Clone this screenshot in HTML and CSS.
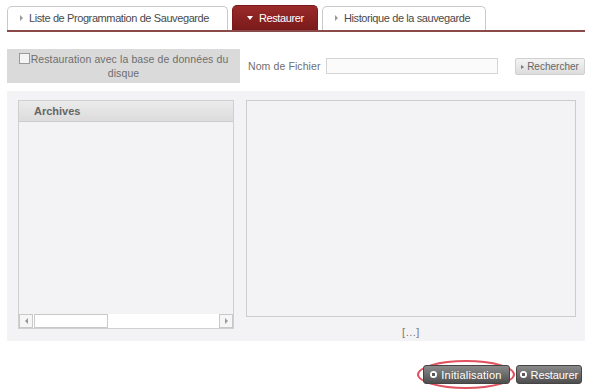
FILE: index.html
```html
<!DOCTYPE html>
<html lang="fr">
<head>
    <meta charset="UTF-8">
    <title>Restaurer</title>
    <link rel="stylesheet" href="styles.css">
</head>
<body>
    <div class="tabs">
        <div class="tab"><span class="arrow-r"></span>Liste de Programmation de Sauvegarde</div>
        <div class="tab active"><span class="arrow-d"></span>Restaurer</div>
        <div class="tab tab3"><span class="arrow-r"></span>Historique de la sauvegarde</div>
    </div>

    <div class="search-row">
        <label class="disk-box">
            <input type="checkbox" class="chk">Restauration avec la base de données du disque
        </label>
        <span class="file-label">Nom de Fichier</span>
        <input type="text" class="file-input">
        <button class="btn-search"><span class="arrow-s"></span>Rechercher</button>
    </div>

    <div class="main-panel">
        <div class="archives">
            <div class="archives-head">Archives</div>
            <div class="archives-body"></div>
            <div class="hscroll">
                <span class="sbtn"><span class="tri-l"></span></span>
                <span class="thumb"></span>
                <span class="track"></span>
                <span class="sbtn"><span class="tri-r"></span></span>
            </div>
        </div>
        <div class="detail">
            <div class="detail-box"></div>
            <div class="more">[...]</div>
        </div>
    </div>

    <div class="actions">
        <div class="ring">
            <button class="btn-dark"><span class="dot"></span>Initialisation</button>
        </div>
        <button class="btn-dark btn-small"><span class="dot"></span>Restaurer</button>
    </div>
</body>
</html>
```

FILE: styles.css
```css
body {
    margin: 0;
    padding: 4px 5px 0 7px;
    background: #ffffff;
    font-family: "Liberation Sans", Arial, sans-serif;
    color: #555555;
}

/* onglets */
.tabs {
    display: flex;
    gap: 4px;
    height: 25px;
    border-bottom: 2px solid #8a4a4a;
    padding-top: 1px;
}
.tab {
    flex-shrink: 0;
    white-space: nowrap;
    overflow: hidden;
    height: 23px;
    border: 1px solid #c9c9c9;
    border-bottom: none;
    border-radius: 5px 5px 0 0;
    background: #ffffff;
    font-size: 11px;
    letter-spacing: -0.4px;
    color: #4a4a4a;
    line-height: 23px;
    padding-left: 12px;
    width: 207px;
    margin-top: 1px;
}
.tab.active {
    height: 24px;
    margin-top: 0;
    background: linear-gradient(#9a2a2a, #7a1a1a);
    border-color: #7a1a1a;
    color: #ffffff;
    line-height: 24px;
    padding-left: 14px;
    width: 70px;
}
.tab.tab3 {
    width: 150px;
}
.arrow-r {
    display: inline-block;
    width: 0;
    height: 0;
    border-left: 3px solid #9a9a9a;
    border-top: 3px solid transparent;
    border-bottom: 3px solid transparent;
    margin-right: 6px;
    vertical-align: 1px;
}
.arrow-d {
    display: inline-block;
    width: 0;
    height: 0;
    border-top: 4px solid #ffffff;
    border-left: 3px solid transparent;
    border-right: 3px solid transparent;
    margin-right: 6px;
    vertical-align: 2px;
}

/* recherche */
.search-row {
    display: flex;
    align-items: center;
    margin-top: 17px;
    height: 34px;
}
.disk-box {
    flex-shrink: 0;
    width: 233px;
    height: 34px;
    box-sizing: border-box;
    background: #dadada;
    font-size: 10.5px;
    letter-spacing: 0.1px;
    line-height: 14px;
    text-align: center;
    color: #6e6e6e;
    padding: 3px 2px 0 2px;
}
.chk {
    width: 11px;
    height: 11px;
    margin: 0 1px 0 0;
    vertical-align: -1px;
    appearance: none;
    border: 1px solid #9a9a9a;
    background: #f4f4f4;
    box-sizing: border-box;
}
.file-label {
    font-size: 10.5px;
    letter-spacing: 0.1px;
    color: #6e6e6e;
    margin-left: 8px;
}
.file-input {
    width: 172px;
    height: 16px;
    box-sizing: border-box;
    border: 1px solid #d4d4d4;
    background: #fbfbfb;
    margin-left: 5px;
    padding: 0;
}
.btn-search {
    margin-left: auto;
    height: 17px;
    width: 70px;
    border: 1px solid #d0d0d0;
    border-radius: 2px;
    background: linear-gradient(#f4f4f4, #dcdcdc);
    font-family: "Liberation Sans", Arial, sans-serif;
    font-size: 10px;
    color: #666666;
    padding: 0;
}
.arrow-s {
    display: inline-block;
    width: 0;
    height: 0;
    border-left: 3px solid #777777;
    border-top: 2px solid transparent;
    border-bottom: 2px solid transparent;
    margin-right: 3px;
    vertical-align: 1px;
}

/* panneau principal */
.main-panel {
    display: flex;
    margin-top: 8px;
    height: 250px;
    background: #f3f3f5;
    padding: 9px 9px 0 11px;
    box-sizing: border-box;
    gap: 12px;
}
.archives {
    width: 216px;
    height: 229px;
    border: 1px solid #cfcfcf;
    box-sizing: border-box;
    display: flex;
    flex-direction: column;
}
.archives-head {
    height: 20px;
    background: linear-gradient(#ebebeb, #dcdcdc);
    border-bottom: 1px solid #cccccc;
    font-size: 11px;
    font-weight: bold;
    color: #666666;
    line-height: 20px;
    padding-left: 15px;
}
.archives-body {
    flex: 1;
}
.hscroll {
    display: flex;
    height: 14px;
    background: #ffffff;
}
.sbtn {
    width: 12px;
    height: 12px;
    border: 1px solid #c9c9c9;
    background: #f6f6f6;
    display: flex;
    align-items: center;
    justify-content: center;
}
.thumb {
    width: 72px;
    height: 12px;
    border: 1px solid #c9c9c9;
    margin-left: 1px;
    background: #ffffff;
}
.track {
    flex: 1;
}
.tri-l, .tri-r {
    width: 0;
    height: 0;
    border-top: 3px solid transparent;
    border-bottom: 3px solid transparent;
}
.tri-l {
    border-right: 3px solid #999999;
}
.tri-r {
    border-left: 3px solid #999999;
}
.detail {
    flex: 1;
    display: flex;
    flex-direction: column;
}
.detail-box {
    height: 217px;
    border: 1px solid #cccccc;
    box-sizing: border-box;
    background: #f3f3f5;
}
.more {
    text-align: center;
    font-size: 11px;
    color: #777777;
    margin-top: 9px;
    letter-spacing: 0.5px;
}

/* boutons */
.actions {
    display: flex;
    justify-content: flex-end;
    align-items: center;
    gap: 1px;
    margin-top: 19px;
    padding-right: 3px;
}
.ring {
    border: 2px solid #e0525f;
    border-radius: 50%;
    padding: 3px 3px 3px 4px;
}
.btn-dark {
    height: 19px;
    padding: 0 7px 0 6px;
    border: 1px solid #444444;
    border-radius: 3px;
    background: linear-gradient(#8a8a8a, #4e4e4e);
    font-family: "Liberation Sans", Arial, sans-serif;
    font-size: 11px;
    letter-spacing: 0.2px;
    color: #ffffff;
    display: flex;
    align-items: center;
}
.btn-small {
    padding: 0 3px;
    letter-spacing: -0.1px;
}
.dot {
    width: 7px;
    height: 7px;
    border-radius: 50%;
    background: radial-gradient(circle, #5a5a5a 0 1.5px, #ffffff 2px);
    margin-right: 4px;
}
```
